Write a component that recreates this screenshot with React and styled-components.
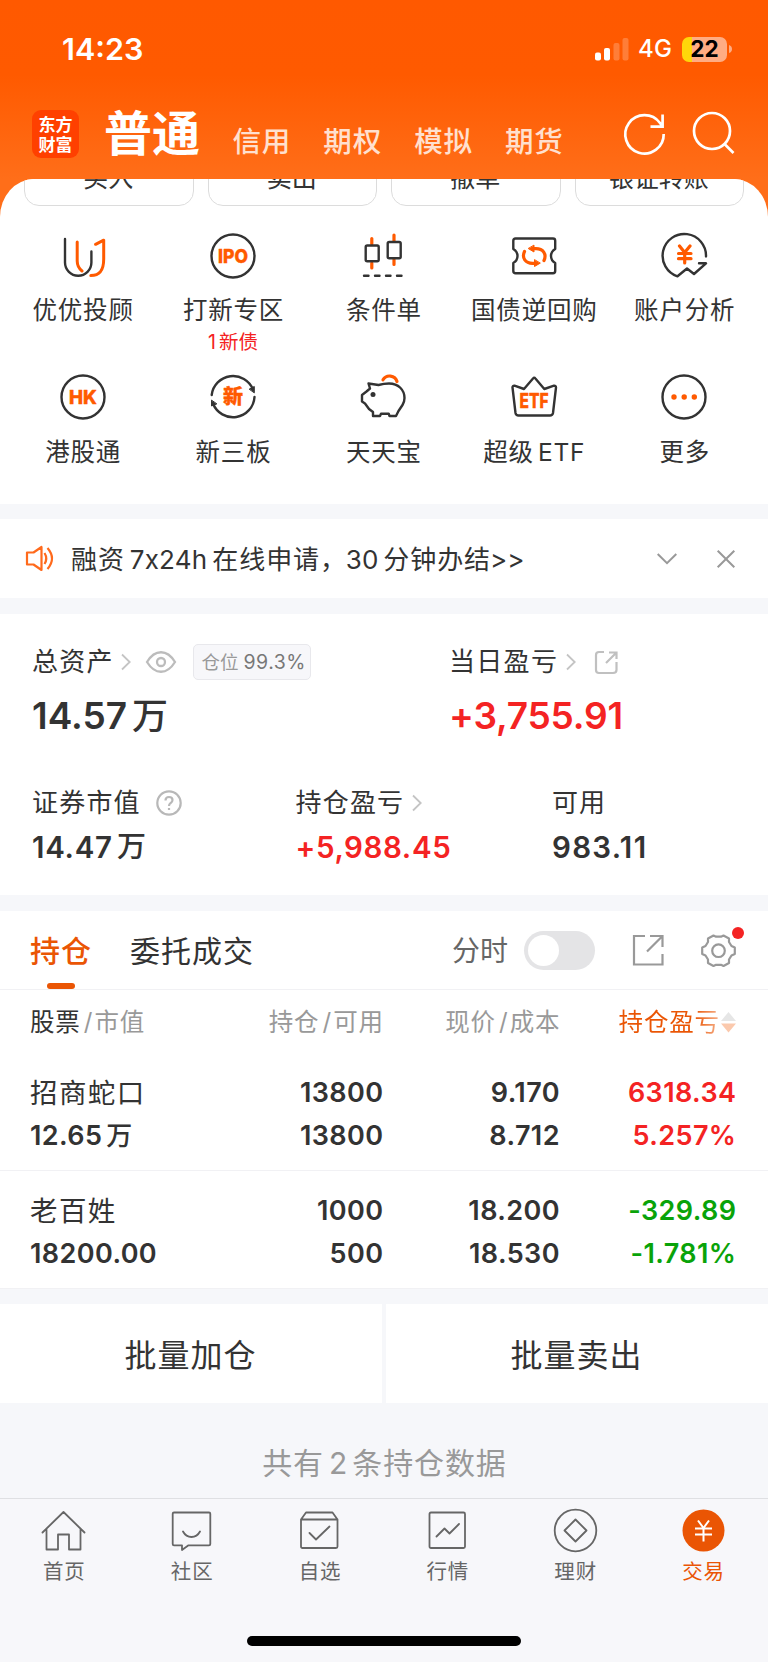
import React from "react";
import styled, { createGlobalStyle } from "styled-components";

const ORANGE = "#ff5a00";
const BRAND = "#ea5504";
const INK = "#333";
const RED = "#f42323";
const GREEN = "#09a309";

const Global = createGlobalStyle`
  * { box-sizing: border-box; }
  body {
    margin: 0;
    background: #fff;
    font-family: Inter, "Noto Sans CJK SC", sans-serif;
    color: ${INK};
  }
  svg { display: block; flex: none; overflow: visible; }
`;

const Screen = styled.div`
  width: 768px;
  height: 1663px;
  display: flex;
  flex-direction: column;
  overflow: hidden;
  background: #fff;
`;

const Label = styled.span`
  font-size: ${(p) => p.$size}px;
  font-weight: ${(p) => p.$weight || 400};
  letter-spacing: ${(p) => p.$track || 0}px;
  margin-right: ${(p) => -(p.$track || 0)}px;
  color: ${(p) => p.$color || "inherit"};
  line-height: ${(p) => p.$line || 30}px;
  white-space: nowrap;
`;

/* Header */
const Top = styled.header`
  height: 219px;
  flex: none;
  margin-bottom: -40px;
  background: linear-gradient(#ff5900 0, #ff5a00 75px, #ff6e19 179px, #ff6e19 100%);
  color: #fff;
`;

const StatusBar = styled.div`
  height: 98px;
  padding: 0 36px 0 62px;
  display: flex;
  align-items: center;
`;

const StatusRight = styled.div`
  margin-left: auto;
  display: flex;
  align-items: center;
  gap: 10px;
`;

const Battery = styled.div`
  width: 45px;
  height: 25px;
  border-radius: 7px;
  background: linear-gradient(90deg, #ffd60a 10px, #ffac83 10px);
  color: #000;
  display: flex;
  align-items: center;
  justify-content: center;
`;

const Nav = styled.nav`
  height: 72px;
  padding: 0 33px 0 32px;
  display: flex;
  align-items: center;
`;

const Logo = styled.div`
  width: 47px;
  height: 48px;
  padding: 4px 0 5px;
  border-radius: 9px;
  background: #ff4000;
  display: flex;
  flex-direction: column;
  justify-content: space-between;
  align-items: center;
  font: 700 17px/19px "Noto Sans CJK SC", sans-serif;
`;

const NavTabs = styled.div`
  display: flex;
  gap: 33px;
  margin-left: 32.5px;
  margin-top: 15px;
`;

const NavIcons = styled.div`
  display: flex;
  margin-left: auto;
  gap: 27px;
  align-items: center;
`;

/* Quick actions */
const Panel = styled.section`
  height: 325px;
  flex: none;
  background: #fff;
  border-radius: 34px 34px 0 0 / 38px 38px 0 0;
  overflow: hidden;
`;

const PillRow = styled.div`
  display: flex;
  gap: 14px;
  padding: 0 24px;
  margin-top: -31px;
`;

const Pill = styled.button`
  flex: 1;
  height: 58px;
  padding: 1px 1px 0 0;
  border: 1.5px solid #dcdcdc;
  border-radius: 15px;
  background: #fff;
  color: ${INK};
  font-family: inherit;
`;

const Grid = styled.div`
  display: grid;
  grid-template-columns: repeat(5, 1fr);
  grid-auto-rows: 141.5px;
  padding: 26.5px 8.5px 0 7.5px;
`;

const Shortcut = styled.div`
  display: flex;
  flex-direction: column;
  align-items: center;
`;

const ShortcutName = styled(Label)`
  margin-top: 16.5px;
`;

const Gap = styled.div`
  flex: none;
  height: ${(p) => p.$h || 16}px;
  background: #f6f7fa;
`;

/* Notice */
const Notice = styled.section`
  height: 79px;
  flex: none;
  display: flex;
  align-items: center;
  padding: 0 33px 0 26px;
`;

const NoticeText = styled(Label)`
  margin-left: 17px;
  padding-top: 2px;
`;

const NoticeActions = styled.div`
  margin-left: auto;
  display: flex;
  align-items: center;
  gap: 40px;
`;

const Num = styled.span`
  margin: 0 ${(p) => p.$r ?? 5}px 0 ${(p) => p.$l ?? 5}px;
  letter-spacing: ${(p) => p.$track || 0}px;
`;

const Unit = styled.span`
  margin-left: 4px;
  font-size: 26px;
  font-weight: 500;
`;

/* Assets */
const Assets = styled.section`
  height: 281px;
  flex: none;
  padding: 30px 32px 0;
`;

const Columns = styled.div`
  display: grid;
  grid-template-columns: ${(p) => p.$cols};
  margin-top: ${(p) => p.$mt || 0}px;
`;

const Caption = styled.div`
  height: ${(p) => p.$h}px;
  display: flex;
  align-items: center;
`;

const Figure = styled.div`
  display: flex;
  align-items: center;
  margin-top: ${(p) => p.$mt}px;
  gap: 5px;
  color: ${(p) => p.$color || INK};
`;

const Badge = styled.div`
  display: flex;
  align-items: center;
  gap: 5px;
  width: 118px;
  height: 36px;
  padding-left: 7.5px;
  margin-left: 16.5px;
  border: 1.5px solid #e8e8ec;
  border-radius: 5px;
  background: #f7f7fa;
`;

/* Positions */
const TabRow = styled.div`
  height: 79px;
  flex: none;
  display: flex;
  align-items: center;
  padding: 0 32px 0 30px;
  border-bottom: 1px solid #f1f1f4;
`;

const Tab = styled.div`
  height: 78px;
  display: flex;
  flex-direction: column;
  align-items: center;
  padding-top: 25px;
  margin-right: 39px;

  &::after {
    content: "";
    width: 28px;
    height: 6px;
    margin-top: auto;
    border-radius: 3px;
    background: ${(p) => (p.$active ? BRAND : "transparent")};
  }
`;

const Tools = styled.div`
  display: flex;
  align-items: center;
  margin-left: auto;
`;

const SwitchName = styled(Label)`
  padding-top: 2px;
`;

const Switch = styled.div`
  width: 71px;
  height: 39px;
  margin: 0 38px 0 16px;
  padding: 4px;
  border-radius: 20px;
  background: #e4e4e6;

  &::after {
    content: "";
    display: block;
    width: 31px;
    height: 31px;
    border-radius: 50%;
    background: #fff;
  }
`;

const GearButton = styled.div`
  position: relative;
  margin-left: 37px;
`;

const Dot = styled.i`
  position: absolute;
  top: -6px;
  right: -8px;
  width: 12px;
  height: 12px;
  border-radius: 50%;
  background: ${RED};
`;

const Row = styled.div`
  height: ${(p) => p.$h}px;
  flex: none;
  display: grid;
  grid-template-columns: 151px 202px 176.5px 176.5px;
  padding: ${(p) => p.$pt}px 32px 0 30px;
  border-bottom: ${(p) => (p.$line ? "1px solid #f1f1f4" : "none")};
`;

const Cell = styled.div`
  display: flex;
  flex-direction: column;
  align-items: ${(p) => (p.$left ? "flex-start" : "flex-end")};
  color: ${(p) => p.$color || INK};
`;

const HeadCell = styled.div`
  display: flex;
  align-items: center;
  justify-content: ${(p) => (p.$left ? "flex-start" : "flex-end")};
  height: 30px;
  color: #999;
`;

const Slash = styled(Label)`
  margin: 0 2px 0 4px;
`;

const SortName = styled(Label)`
  background: linear-gradient(90deg, ${BRAND} 75%, #f6b48f 100%);
  background-clip: text;
  color: transparent;
`;

const Batch = styled.div`
  display: grid;
  grid-template-columns: 1fr 1fr;
  gap: 4px;
  height: 99px;
  flex: none;
  background: #f6f7fa;
`;

const BatchButton = styled.div`
  display: flex;
  align-items: center;
  justify-content: center;
  padding: 4px 2px 0 0;
  background: #fff;
`;

const Summary = styled.div`
  height: 95px;
  flex: none;
  padding-top: 24px;
  display: flex;
  align-items: center;
  justify-content: center;
  background: #f6f7fa;
  color: #999;
`;

/* Tab bar */
const TabBar = styled.footer`
  height: 164px;
  flex: none;
  display: flex;
  flex-direction: column;
  align-items: center;
  border-top: 1px solid #dfe0e3;
  background: #f7f7fa;
`;

const TabItems = styled.div`
  width: 100%;
  height: 137px;
  padding-right: 1px;
  display: grid;
  grid-template-columns: repeat(6, 1fr);
`;

const TabItem = styled.div`
  display: flex;
  flex-direction: column;
  align-items: center;
  gap: 4px;
  padding-top: 8.5px;
  color: ${(p) => (p.$active ? BRAND : "#666")};
`;

const HomeIndicator = styled.div`
  width: 274px;
  height: 10px;
  border-radius: 5px;
  background: #000;
`;

function Icon({ children, size = 46, stroke = INK, width = 2.4 }) {
  return (
    <svg
      width={size}
      height={size}
      viewBox={`0 0 ${size} ${size}`}
      fill="none"
      stroke={stroke}
      strokeWidth={width}
      strokeLinecap="round"
      strokeLinejoin="round"
    >
      {children}
    </svg>
  );
}

function IconText({ y, size, width, children }) {
  return (
    <text
      x="23"
      y={y}
      textAnchor="middle"
      fontSize={size}
      fontWeight="800"
      fill={ORANGE}
      stroke={ORANGE}
      strokeWidth=".4"
      textLength={width}
      lengthAdjust="spacingAndGlyphs"
    >
      {children}
    </text>
  );
}

const shortcuts = [
  {
    name: "优优投顾",
    art: (
      <>
        <path d="M5 6V29.5A13.2 13.2 0 0 0 31.4 29.5V18.5" />
        <g stroke={ORANGE} strokeWidth="3">
          <path d="M17.2 9V28Q17.2 34 22 38" />
          <path d="M35.6 11.3L43.7 7.2V26C43.7 37 40 42.5 30.8 42.5" />
        </g>
      </>
    ),
  },
  {
    name: "打新专区",
    note: (
      <>
        <Num $l={0} $r={3}>1</Num>新债
      </>
    ),
    art: (
      <>
        <circle cx="23" cy="23" r="21.5" />
        <IconText y="29.8" size="19" width="30">IPO</IconText>
      </>
    ),
  },
  {
    name: "条件单",
    art: (
      <>
        <path stroke={ORANGE} strokeWidth="3.2" d="M11.8 5.5V11M11.8 30V35M34 2V8M34 26.5V31.5" />
        <rect x="5.7" y="12.5" width="13" height="15.8" rx="1.5" />
        <rect x="27.7" y="9" width="13" height="16.3" rx="1.5" />
        <path d="M4 42.7H8.5M15 42.7H19.5M26 42.7H30.5M37 42.7H41.5" />
      </>
    ),
  },
  {
    name: "国债逆回购",
    art: (
      <>
        <path d="M4.5 5.5H42Q44.2 5.5 44.2 7.7V16Q40 18.5 40 23Q40 27.5 44.2 30V38Q44.2 40.2 42 40.2H4.5Q2.3 40.2 2.3 38V30Q6.5 27.5 6.5 23Q6.5 18.5 2.3 16V7.7Q2.3 5.5 4.5 5.5Z" />
        <g stroke={ORANGE} strokeWidth="3.2">
          <path d="M13.5 18.5C10.5 25 14.5 30.3 21.5 30.3H24" />
          <path d="M33 27.5C36 21 32 15.7 25 15.7H22" />
          <path fill={ORANGE} strokeWidth="1" d="M23.5 27V33.5L29 30.3ZM23 12.5V19L17.5 15.7Z" />
        </g>
      </>
    ),
  },
  {
    name: "账户分析",
    art: (
      <>
        <path d="M45 23.5A21.7 21.7 0 1 0 16.5 43.3L26 35.5L33 41L45 30.3H38" />
        <path stroke={ORANGE} strokeWidth="3.2" d="M18.5 13L23.7 19.5L29 13M23.7 19.5V30M17.5 20.5H30M17.5 25.7H30" />
      </>
    ),
  },
  {
    name: "港股通",
    art: (
      <>
        <circle cx="23" cy="23" r="21.5" />
        <IconText y="29.8" size="19" width="28">HK</IconText>
      </>
    ),
  },
  {
    name: "新三板",
    art: (
      <>
        <path d="M1.7 21A21.5 21.5 0 0 1 43 15.5M44.5 23A21.5 21.5 0 0 1 3 29.5" />
        <path fill={INK} strokeWidth="1" d="M39.5 15L44.3 12.5V18.5ZM6.5 30L1.5 32V26.5Z" />
        <IconText y="30.3" size="20" width="20">新</IconText>
      </>
    ),
  },
  {
    name: "天天宝",
    art: (
      <>
        <path d="M8.5 9.5L18.5 11Q24 9.5 29 9.5C38.5 9.5 44.5 16 44.5 24Q44.5 28 42.5 31L38.5 37L36 42H29.5L28.7 39.7H21L20 42H13V38L9 35L5 29.5L2 27.5V21L6.5 17.5L10 14.5Z" />
        <path stroke={ORANGE} strokeWidth="3.2" d="M23 5.8A7.7 7.7 0 0 1 37 7.5" />
        <circle cx="13" cy="20.5" r="2.5" fill={INK} stroke="none" />
      </>
    ),
  },
  {
    name: (
      <>
        超级<Num $l={4} $r={0} $track={0.8}>ETF</Num>
      </>
    ),
    art: (
      <>
        <path d="M22 4.5Q23.2 3 24.4 4.5L33.3 15L43 11.7Q45 11.5 45 13.5L42 39Q41.5 41.5 39 41.5H7.5Q5 41.5 4.5 39L1.5 13.5Q1.5 11.5 3.5 11.7L13 15Z" />
        <IconText y="34.3" size="19.5" width="29">ETF</IconText>
      </>
    ),
  },
  {
    name: "更多",
    art: (
      <>
        <circle cx="23" cy="23" r="21.5" />
        <g fill={ORANGE} stroke="none">
          <circle cx="13" cy="23" r="2.7" />
          <circle cx="23.2" cy="23" r="2.7" />
          <circle cx="33.3" cy="23" r="2.7" />
        </g>
      </>
    ),
  },
];

const holdings = [
  {
    name: "招商蛇口",
    value: "12.65",
    unit: "万",
    held: "13800",
    free: "13800",
    price: "9.170",
    cost: "8.712",
    gain: "6318.34",
    rate: "5.257%",
    color: RED,
  },
  {
    name: "老百姓",
    value: "18200.00",
    held: "1000",
    free: "500",
    price: "18.200",
    cost: "18.530",
    gain: "-329.89",
    rate: "-1.781%",
    color: GREEN,
  },
];

const tabs = [
  {
    name: "首页",
    art: <path d="M1.5 24.5L22.5 4L43.5 24.5M5.5 21V41.5H17V26.5H28V41.5H39.5V21" />,
  },
  {
    name: "社区",
    art: (
      <path d="M5 4.5H40Q41.3 4.5 41.3 5.8V36Q41.3 37.3 40 37.3H19.5L13 42V37.3H5Q3.7 37.3 3.7 36V5.8Q3.7 4.5 5 4.5ZM14 23.5Q17 29 22.5 29Q28 29 31 23.5" />
    ),
  },
  {
    name: "自选",
    art: (
      <path d="M4 11.5L9 4.5H35.5L40.5 11.5M4 11.5H40.5V38.5Q40.5 40 39 40H5.5Q4 40 4 38.5ZM12.5 25L19 31.5L32.5 18.5" />
    ),
  },
  {
    name: "行情",
    art: (
      <path d="M6 4.5H38.5Q40 4.5 40 6V38.5Q40 40 38.5 40H6Q4.5 40 4.5 38.5V6Q4.5 4.5 6 4.5ZM11.5 28.5L19.5 20.5L24.5 25.5L34 16" />
    ),
  },
  {
    name: "理财",
    art: (
      <>
        <circle cx="22.5" cy="22.5" r="20.8" />
        <path d="M22.5 11.5L33.5 22.5L22.5 33.5L11.5 22.5Z" />
      </>
    ),
  },
  {
    name: "交易",
    active: true,
    art: (
      <>
        <circle cx="22.5" cy="22.5" r="21" fill={BRAND} stroke="none" />
        <path stroke="#fff" strokeWidth="2" strokeLinecap="butt" d="M17 12.5L22.5 20L28 12.5M22.5 20V33.5M14 20.5H31M14 26.5H31" />
      </>
    ),
  },
];

function Chevron({ left }) {
  return (
    <svg width="10" height="18" viewBox="0 0 10 18" fill="none" stroke="#c4c4c4" strokeWidth="1.8" style={{ marginLeft: left }}>
      <path d="M1 1.500L8.700 9L1 16.500" />
    </svg>
  );
}

function Figures({ children }) {
  return (
    <Label $size={27} $weight={600} $track={0.4} $line={42.6}>
      {children}
    </Label>
  );
}

export default function App() {
  return (
    <Screen>
      <Global />
      <Top>
        <StatusBar>
          <Label $size={30.5} $weight={600}>14:23</Label>
          <StatusRight>
            <svg width="34" height="23" fill="#fff">
              <rect x="1" y="14.5" width="6" height="8" rx="2" />
              <rect x="10" y="10" width="6" height="12.5" rx="2" />
              <rect x="19.5" y="5" width="6" height="17.5" rx="2" opacity=".22" />
              <rect x="28.5" y="0" width="6" height="22.5" rx="2" opacity=".22" />
            </svg>
            <Label $size={24} $weight={500} $line={32} $track={0.3}>4G</Label>
            <Battery>
              <Label $size={22.5} $weight={700}>22</Label>
            </Battery>
            <svg width="3" height="8" style={{ marginLeft: -8 }}>
              <path d="M0 0Q3 1 3 4Q3 7 0 8Z" fill="#ffac83" />
            </svg>
          </StatusRight>
        </StatusBar>
        <Nav>
          <Logo>
            <span>东方</span>
            <span>财富</span>
          </Logo>
          <Label $size={48} $weight={700} $line={48} style={{ marginLeft: 25 }}>普通</Label>
          <NavTabs>
            {["信用", "期权", "模拟", "期货"].map((name) => (
              <Label key={name} $size={28.5} $weight={500} $track={0.8} $color="#ffe0cf">{name}</Label>
            ))}
          </NavTabs>
          <NavIcons>
            <svg width="42" height="44" fill="none" stroke="#fff" strokeWidth="2.7">
              <path d="M39.7 22A19.2 19.2 0 1 1 36 11L38.5 14.5M26.5 14.7H38.6V2.500" />
            </svg>
            <svg width="42" height="44" fill="none" stroke="#fff" strokeWidth="2.7">
              <circle cx="19" cy="19" r="18" />
              <path d="M31.5 32L40.5 41" />
            </svg>
          </NavIcons>
        </Nav>
      </Top>

      <Panel>
        <PillRow>
          {["买入", "卖出", "撤单", "银证转账"].map((name) => (
            <Pill key={name}>
              <Label $size={25}>{name}</Label>
            </Pill>
          ))}
        </PillRow>
        <Grid>
          {shortcuts.map((s, i) => (
            <Shortcut key={i}>
              <Icon>{s.art}</Icon>
              <ShortcutName $size={24.5} $track={0.8}>{s.name}</ShortcutName>
              {s.note && <Label $size={19.5} $color={RED} $line={34}>{s.note}</Label>}
            </Shortcut>
          ))}
        </Grid>
      </Panel>

      <Gap $h={15} />
      <Notice>
        <svg width="28" height="27" fill="none" stroke="#ff6a1c" strokeWidth="2.2" strokeLinejoin="round">
          <path d="M1 7.5H7.5L15.5 2V25L7.5 19.5H1ZM18.5 8Q22 13.5 18.5 19M21.5 3Q30.5 13.5 21.5 24" />
        </svg>
        <NoticeText $size={26} $track={0.9} $line={34}>
          融资<Num $track={0.2}>7x24h</Num>在线申请，<Num $l={-1}>30</Num>分钟办结<Num $l={-1} $r={0}>&gt;&gt;</Num>
        </NoticeText>
        <NoticeActions>
          <svg width="20" height="12" fill="none" stroke="#999" strokeWidth="2">
            <path d="M.7 1L10 10.2L19.3 1" />
          </svg>
          <svg width="18" height="18" fill="none" stroke="#999" strokeWidth="2">
            <path d="M.7 .7L17.3 17.3M17.3 .7L.7 17.3" />
          </svg>
        </NoticeActions>
      </Notice>
      <Gap />

      <Assets>
        <Columns $cols="417px 1fr">
          <div>
            <Caption $h={36}>
              <Label $size={26} $track={1.2}>总资产</Label>
              <Chevron left={9} />
              <svg width="30" height="22" fill="none" stroke="#bcbcbc" strokeWidth="2.3" style={{ marginLeft: 15 }}>
                <path d="M1 11C9-2 21-2 29 11C21 24 9 24 1 11Z" />
                <circle cx="15" cy="11" r="4" />
              </svg>
              <Badge>
                <Label $size={18.5} $color="#999">仓位</Label>
                <Label $size={19.5} $track={0.5} $color="#777">99.3%</Label>
              </Badge>
            </Caption>
            <Figure $mt={14}>
              <Label $size={37} $weight={600} $line={44}>14.57</Label>
              <Label $size={36} $weight={500} $line={44}>万</Label>
            </Figure>
          </div>
          <div>
            <Caption $h={36}>
              <Label $size={26} $track={1.3}>当日盈亏</Label>
              <Chevron left={9} />
              <svg width="23" height="23" fill="none" stroke="#c0c0c0" strokeWidth="2.2" style={{ marginLeft: 19.5 }}>
                <path d="M9 1H4Q1 1 1 4V19Q1 22 4 22H18Q21.5 22 21.5 19V11M14 1.5H21.5V8M21.5 1.5L11 12" />
              </svg>
            </Caption>
            <Figure $mt={14} $color={RED}>
              <Label $size={37} $weight={600} $track={-0.2} $line={44}>+3,755.91</Label>
            </Figure>
          </div>
        </Columns>
        <Columns $cols="263.5px 256.5px 1fr" $mt={50}>
          <div>
            <Caption $h={30}>
              <Label $size={26} $track={1.2}>证券市值</Label>
              <svg width="26" height="26" fill="none" stroke="#b8b8b8" strokeWidth="2.2" style={{ marginLeft: 16.5 }}>
                <circle cx="13" cy="13" r="11.7" />
                <path d="M9.5 10.5Q9.5 7 13 7Q16.5 7 16.5 10Q16.5 12 14.5 13.2Q13 14.3 13 16M13 18V20" />
              </svg>
            </Caption>
            <Figure $mt={11}>
              <Label $size={29.5} $weight={600} $track={0.7} $line={36}>14.47</Label>
              <Label $size={29} $weight={500} $line={36}>万</Label>
            </Figure>
          </div>
          <div>
            <Caption $h={30}>
              <Label $size={26} $track={1.2}>持仓盈亏</Label>
              <Chevron left={9} />
            </Caption>
            <Figure $mt={11} $color={RED}>
              <Label $size={29.5} $weight={600} $track={0.6} $line={36}>+5,988.45</Label>
            </Figure>
          </div>
          <div>
            <Caption $h={30}>
              <Label $size={26} $track={1}>可用</Label>
            </Caption>
            <Figure $mt={11}>
              <Label $size={29.5} $weight={600} $track={1.3} $line={36}>983.11</Label>
            </Figure>
          </div>
        </Columns>
      </Assets>
      <Gap />

      <TabRow>
        <Tab $active>
          <Label $size={30} $weight={500} $track={1} $color={BRAND}>持仓</Label>
        </Tab>
        <Tab>
          <Label $size={30} $track={1}>委托成交</Label>
        </Tab>
        <Tools>
          <SwitchName $size={28} $color="#666">分时</SwitchName>
          <Switch />
          <svg width="31" height="31" fill="none" stroke="#999" strokeWidth="2.2">
            <path d="M12 1H1V29.5H29.5V19M17 1H29.5V12M29.5 1L14 16.5" />
          </svg>
          <GearButton>
            <Icon size={35} stroke="#999" width={2.2}>
              <path d="M12.5 2.5L15 3.7H20L22.5 2.5L28 5.5V9L30.5 13L33.8 14.5V21L30.5 22.5L28 26.5V30L22.5 33L20 31.8H15L12.5 33L7 30V26.5L4.5 22.5L1.2 21V14.5L4.5 13L7 9V5.5Z" />
              <circle cx="17.5" cy="17.7" r="6.3" />
            </Icon>
            <Dot />
          </GearButton>
        </Tools>
      </TabRow>

      <Row $h={62} $pt={17}>
        <HeadCell $left>
          <Label $size={24.5} $track={0.8} $color={INK}>股票</Label>
          <Slash $size={24}>/</Slash>
          <Label $size={24.5} $track={0.8}>市值</Label>
        </HeadCell>
        {[["持仓", "可用"], ["现价", "成本"]].map(([a, b]) => (
          <HeadCell key={a}>
            <Label $size={24.5} $track={0.8}>{a}</Label>
            <Slash $size={24}>/</Slash>
            <Label $size={24.5} $track={0.8}>{b}</Label>
          </HeadCell>
        ))}
        <HeadCell>
          <SortName $size={24.5} $track={0.8}>持仓盈亏</SortName>
          <svg width="15" height="22" style={{ marginLeft: 2 }}>
            <path d="M0 10L7.5 1L15 10Z" fill="#e6e6e6" />
            <path d="M0 12.5L7.5 21.5L15 12.5Z" fill="#fbc9ad" />
          </svg>
        </HeadCell>
      </Row>
      {holdings.map((h, i) => (
        <Row key={h.name} $h={i === 0 ? 119 : 118} $pt={i === 0 ? 20 : 19} $line>
          <Cell $left>
            <Label $size={27.5} $track={1.4} $line={42.6}>{h.name}</Label>
            <Figures>
              {h.value}
              {h.unit && <Unit>{h.unit}</Unit>}
            </Figures>
          </Cell>
          <Cell>
            <Figures>{h.held}</Figures>
            <Figures>{h.free}</Figures>
          </Cell>
          <Cell>
            <Figures>{h.price}</Figures>
            <Figures>{h.cost}</Figures>
          </Cell>
          <Cell $color={h.color}>
            <Figures>{h.gain}</Figures>
            <Figures>{h.rate}</Figures>
          </Cell>
        </Row>
      ))}
      <Gap $h={15} />

      <Batch>
        <BatchButton>
          <Label $size={32} $track={1} $line={36}>批量加仓</Label>
        </BatchButton>
        <BatchButton>
          <Label $size={32} $track={1} $line={36}>批量卖出</Label>
        </BatchButton>
      </Batch>
      <Summary>
        <Label $size={30} $track={0.9} $line={36}>
          共有<Num>2</Num>条持仓数据
        </Label>
      </Summary>

      <TabBar>
        <TabItems>
          {tabs.map((t) => (
            <TabItem key={t.name} $active={t.active}>
              <Icon size={45} stroke="#666" width={1.8}>{t.art}</Icon>
              <Label $size={20.5} $track={0.8}>{t.name}</Label>
            </TabItem>
          ))}
        </TabItems>
        <HomeIndicator />
      </TabBar>
    </Screen>
  );
}
